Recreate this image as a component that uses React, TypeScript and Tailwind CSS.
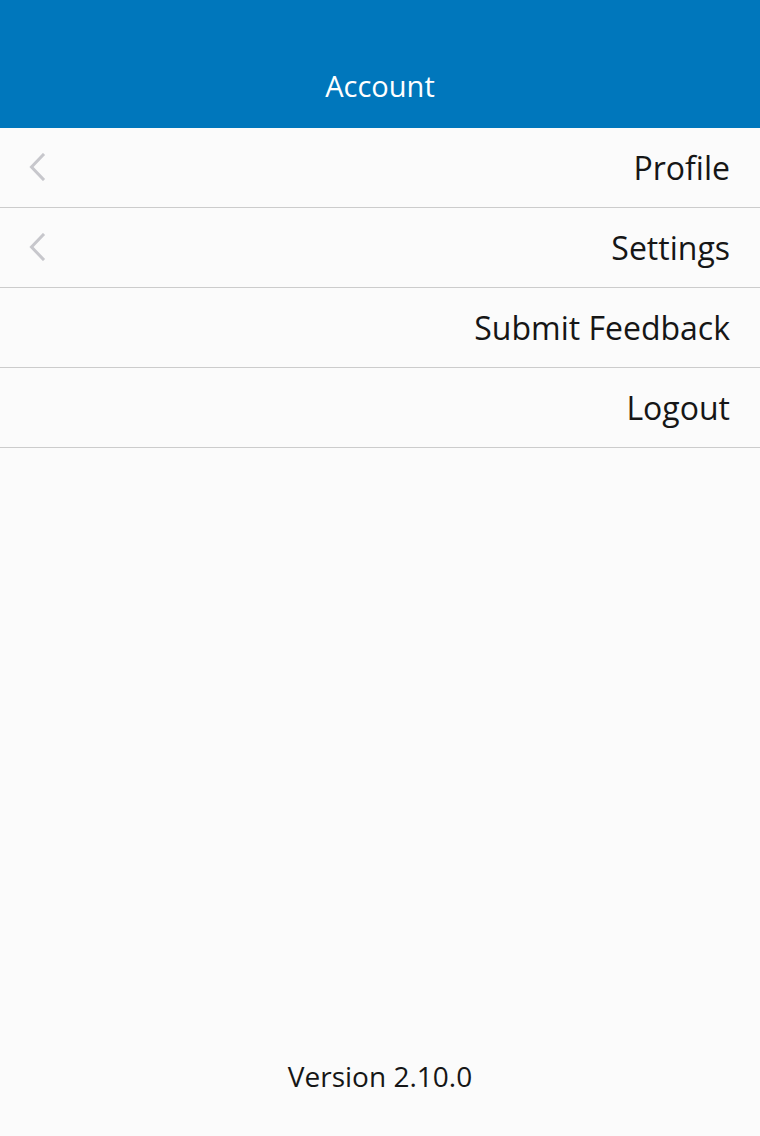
const items = [
  { label: 'Profile', chevron: true },
  { label: 'Settings', chevron: true },
  { label: 'Submit Feedback', chevron: false },
  { label: 'Logout', chevron: false },
]

function Chevron() {
  return <svg width="18" height="28" viewBox="0 0 18 28" fill="none" className="text-[#c7c7cc]">
    <path d="M15 2 L3.5 14 L15 26" stroke="currentColor" strokeWidth="3" strokeLinecap="square" />
  </svg>
}

export default function App() {
  return <div className="flex flex-col min-h-[1136px] bg-[#fbfbfb] font-['Open_Sans',sans-serif]">
    <header className="h-32 bg-[#0077bc] flex items-end justify-center pb-[28px]">
      <h1 className="text-white text-[29px] leading-none">Account</h1>
    </header>
    <ul>
      {items.map((item) => <li key={item.label}
        className="h-20 flex items-center justify-between pl-[28px] pr-[30px] border-b border-[#cccccc]">
        <span className="-mt-[2px]">{item.chevron && <Chevron />}</span>
        <span className="text-[32px] text-[#161616] leading-none">{item.label}</span>
      </li>)}
    </ul>
    <div className="flex-1" />
    <footer className="h-[118px] flex justify-center pt-[44px]">
      <span className="text-[28px] text-[#161616] leading-none">Version 2.10.0</span>
    </footer>
  </div>
}
